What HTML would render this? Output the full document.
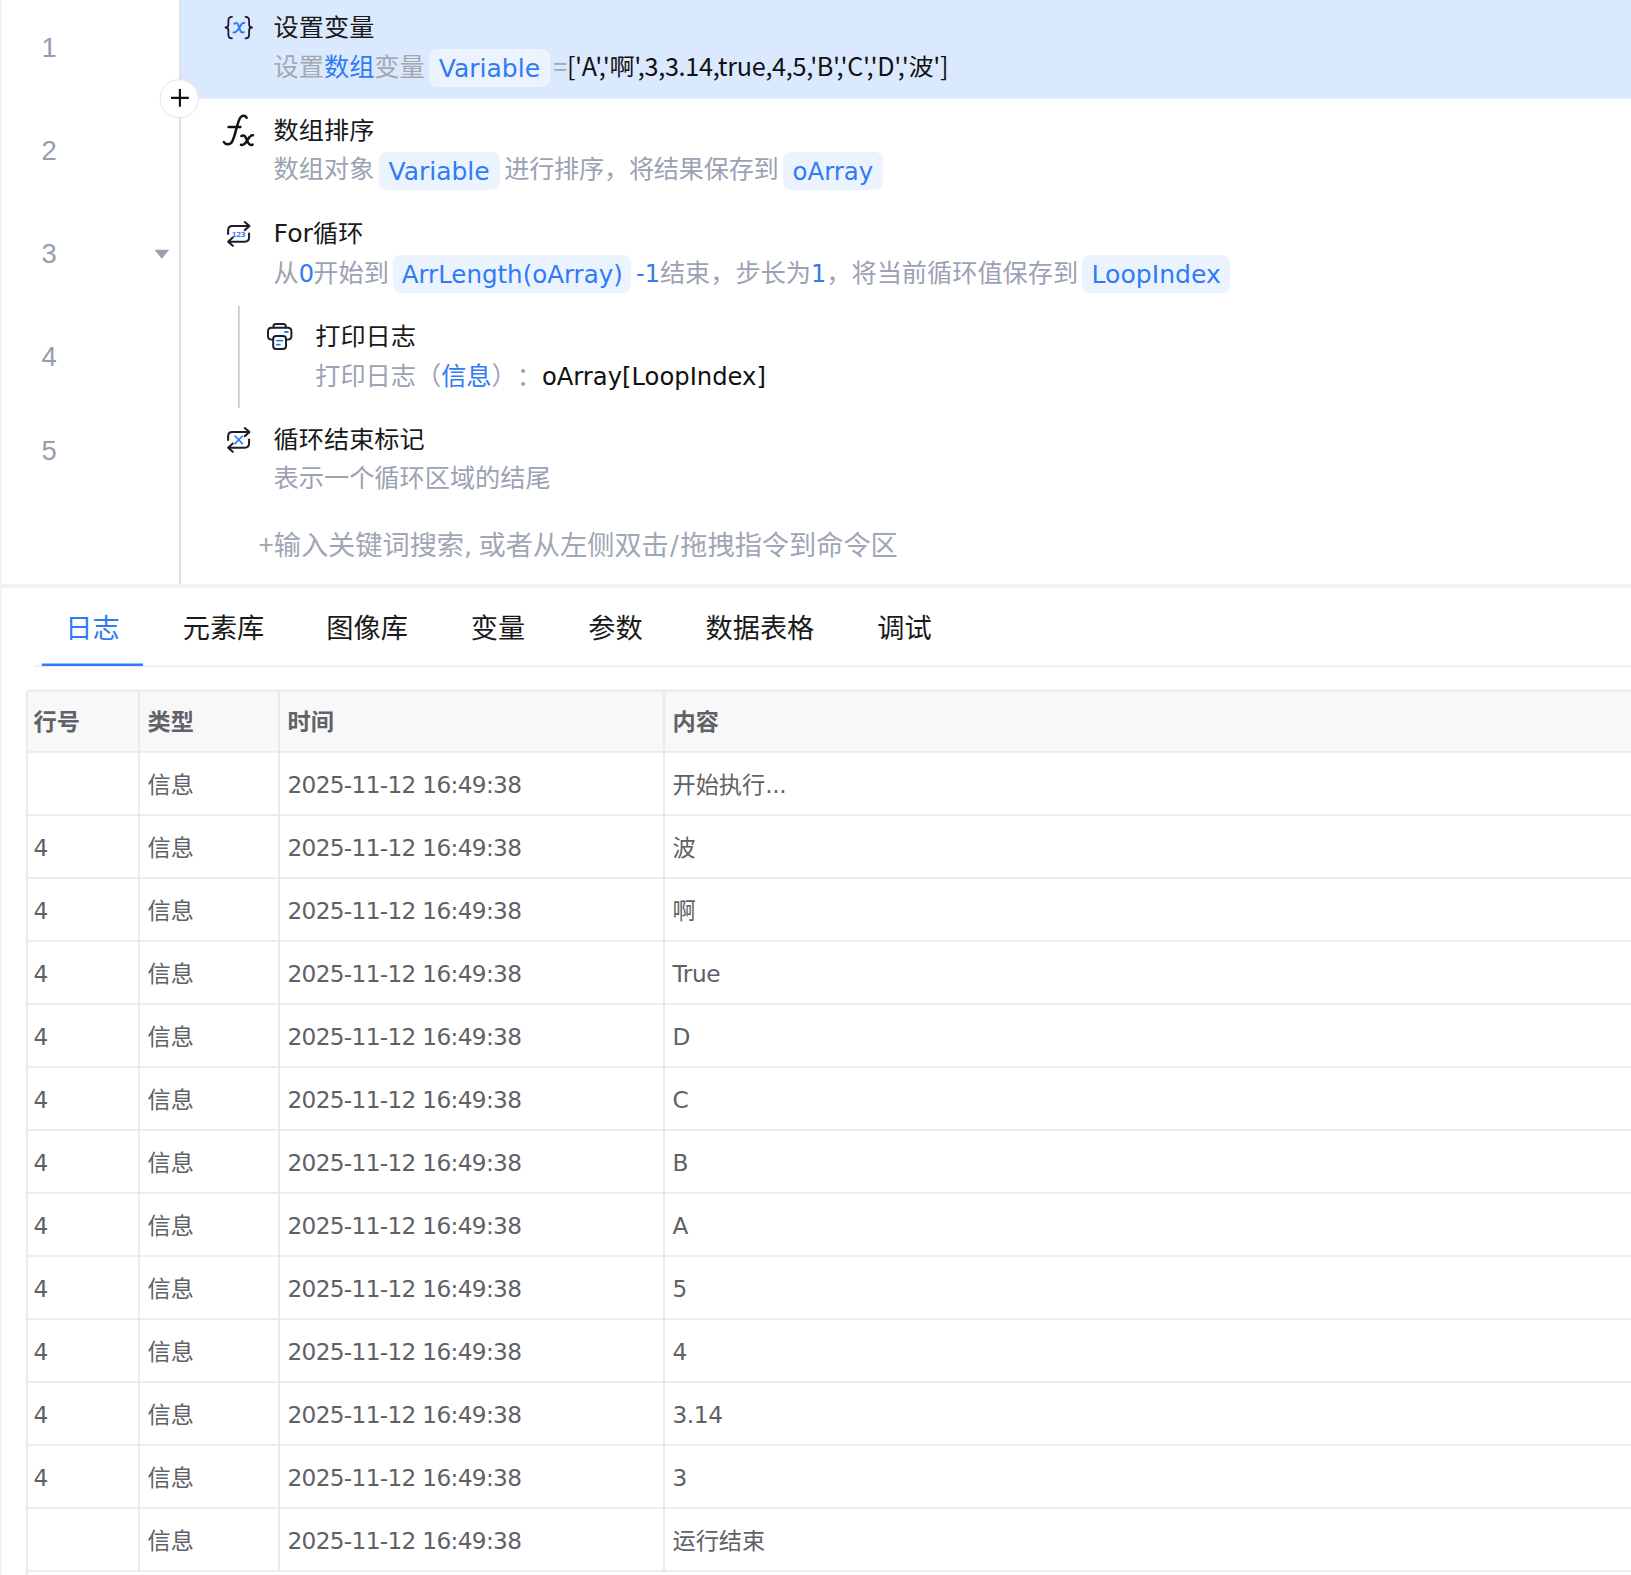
<!DOCTYPE html>
<html>
<head>
<meta charset="utf-8">
<title>流程编辑 - 日志</title>
<style>
html,body{margin:0;padding:0;background:#fff;}
body{width:1631px;height:1575px;overflow:hidden;position:relative;
  font-family:"DejaVu Sans","Noto Sans CJK SC",sans-serif;color:#1a1a1a;text-spacing-trim:space-all;}
#root{position:absolute;left:0;top:0;width:1631px;height:1575px;overflow:hidden;background:#fff;}
svg.bg{position:absolute;left:0;top:0;}
svg.ic{position:absolute;overflow:visible;}
.l{font-size:.952em;}
.ln{position:absolute;left:0;width:98px;text-align:center;font-family:'Liberation Sans',sans-serif;font-size:27.4px;line-height:40px;height:40px;color:#959db0;}
.title{position:absolute;white-space:nowrap;font-size:25.2px;line-height:36px;height:36px;color:#1a1a1a;transform:scaleY(.955);transform-origin:0 29px;}
.desc{position:absolute;white-space:nowrap;font-size:25.2px;line-height:38px;height:38px;color:#9ba2b3;}
.desc .b{color:#2f7bf5;}
.desc .k{color:#111;}
.pill{display:inline-block;height:38px;line-height:39.2px;padding:0;text-align:center;margin:0 4.7px 0 4.3px;border-radius:8px;background:#ebf3ff;color:#2f7bf5;font-size:24.7px;vertical-align:top;position:relative;top:var(--po,0px);}
.arr .c{display:inline-block;transform:scaleY(.9);transform-origin:50% 80%;}
.arr{font-family:'Noto Sans CJK SC',sans-serif;letter-spacing:-.3px;color:#111;line-height:0;margin-left:-1.4px;}
.sel.desc{color:#a4a8b1;}
.sel .pill{background:#ecf3fe;}
.ph{position:absolute;white-space:nowrap;font-size:27.2px;line-height:40px;color:#a0a6b5;}
.tab{position:absolute;white-space:nowrap;font-size:27.2px;line-height:40px;top:608.6px;color:#1a1a1a;}
.tab.on{color:#2f7bf5;}
.th{position:absolute;white-space:nowrap;font-size:23.2px;line-height:34px;font-weight:bold;color:#606267;}
.ts{letter-spacing:-.66px;}
.td .l{font-size:1em;letter-spacing:-.4px;}
.td{position:absolute;white-space:nowrap;font-size:23.2px;line-height:34px;color:#5f6166;}
</style>
</head>
<body>
<div id="root">
<svg class="bg" width="1631" height="1575" viewBox="0 0 1631 1575"><rect x="0" y="0" width="1.8" height="1575" fill="#f0f2f5"/><rect x="0" y="584" width="1631" height="4" fill="#f1f2f5"/><rect x="181" y="0" width="1450" height="98.7" fill="#dbe9fe"/><rect x="179" y="0" width="2" height="584" fill="#dfe0e3"/><rect x="238" y="306" width="1.7" height="102" fill="#c9cacd"/><circle cx="179.3" cy="98.7" r="19.1" fill="#fff" stroke="#e3e5ea" stroke-width="1"/><path d="M171 97.8H188.8M179.9 88.9V106.7" stroke="#111" stroke-width="2.15" fill="none"/><path d="M154.5 249.8H169.2L161.85 258.8Z" fill="#9aa0ae"/><rect x="34" y="665.6" width="1597" height="1.2" fill="#e6e8ec"/><rect x="41.8" y="663.5" width="101.2" height="2.5" fill="#2f7bf5"/><rect x="26.8" y="690.6" width="1610" height="61.4" fill="#f8f8f9"/><path d="M26.8 690.6H1631M26.8 752.0H1631M26.8 815.0H1631M26.8 878.0H1631M26.8 941.0H1631M26.8 1004.0H1631M26.8 1067.0H1631M26.8 1130.0H1631M26.8 1193.0H1631M26.8 1256.0H1631M26.8 1319.0H1631M26.8 1382.0H1631M26.8 1445.0H1631M26.8 1508.0H1631M26.8 1571.0H1631M26.8 690.6V1575M138.9 690.6V1571M279.0 690.6V1571M664.0 690.6V1571" stroke="#e6e7eb" stroke-width="1.6" fill="none"/></svg>
<div class="ln" style="top:27.6px">1</div>
<div class="ln" style="top:130.7px">2</div>
<div class="ln" style="top:233.7px">3</div>
<div class="ln" style="top:337.0px">4</div>
<div class="ln" style="top:431.4px">5</div>
<svg class="ic" style="left:0;top:0" width="330" height="470" viewBox="0 0 330 470" fill="none" stroke-linecap="round" stroke-linejoin="round">
<!-- set variable {x} -->
<g stroke="#1e1c2c" stroke-width="1.8">
<path d="M232 16.8C229.4 16.8 228.4 18 228.4 20.4V24.2C228.4 26.2 227.5 27.5 225.5 27.5C227.5 27.5 228.4 28.8 228.4 30.8V34.7C228.4 37.1 229.4 38.3 232 38.3"/>
<path d="M245.5 16.8C248.1 16.8 249.1 18 249.1 20.4V24.2C249.1 26.2 250 27.5 252 27.5C250 27.5 249.1 28.8 249.1 30.8V34.7C249.1 37.1 248.1 38.3 245.5 38.3"/>
</g>
<g stroke="#2f7bf5" stroke-width="2">
<path d="M234.4 23.6C236.1 22.4 237.6 23 238.5 25.4L240 29.9C240.8 32.2 242.1 33 243.8 32.2"/>
<path d="M244.4 22.9C242.9 22.5 241.6 23.8 239.9 26.7C238.1 29.8 236.2 32.8 233.6 32.6"/>
</g>
<!-- fx -->
<g stroke="#111" stroke-width="2.5">
<path d="M246.6 117.8C245.6 115.6 242.6 114.9 240.6 117.2C239 119 238 122.6 236.4 128.6C234.6 135.4 233.6 139.8 231.6 142.4C229.4 145.2 225.4 144.9 223.8 142"/>
<path d="M228.6 126.9H240.4"/>
<path d="M241.4 136C243.4 134.8 244.8 135.6 245.8 137.8L248 142.6C249 144.8 250.4 145.6 252.6 144.6M253 135.2C251.4 134.8 250 136 248 139.2L246 142.2C244.4 144.6 243 145.4 241 144.8"/>
</g>
<!-- for loop -->
<g stroke="#1e1c2c" stroke-width="2.1" transform="translate(238.6 234) scale(.97) translate(-238.6 -234)">
<path d="M227.8 234V230.2C227.8 227.4 229.6 225.8 232.2 225.8H249.6M245 221.6L249.8 225.8L245 230"/>
<path d="M249.4 233.6V237.4C249.4 240.2 247.6 241.9 245 241.9H227.9M232.6 237.6L227.8 241.9L232.6 246.2"/>
</g>
<text x="238.5" y="236.5" text-anchor="middle" font-family="'DejaVu Sans','Liberation Sans',sans-serif" font-weight="bold" font-size="7" fill="#2f7bf5" stroke="none" letter-spacing="-0.35">123</text>
<!-- printer -->
<g stroke="#1e1c2c" stroke-width="1.95">
<path d="M273.4 327.4V326.4C273.4 324.8 274.6 324 276 324H283.2C284.8 324 285.8 324.8 285.8 326.4V327.4"/>
<path d="M273 339.6H271.6C269.4 339.6 268 338.2 268 336V331.4C268 329.2 269.4 327.8 271.6 327.8H287.8C290 327.8 291.4 329.2 291.4 331.4V336C291.4 338.2 290 339.6 287.8 339.6H286.2"/>
<rect x="273.2" y="336" width="12.8" height="13" rx="3"/>
</g>
<g stroke="#2f7bf5" stroke-width="1.9">
<path d="M285 332H287.8M276.8 340.6H282.4M276.8 344.6H279.8"/>
</g>
<!-- loop end -->
<g stroke="#1e1c2c" stroke-width="2.1" transform="translate(0 206) translate(238.6 234) scale(.97) translate(-238.6 -234)">
<path d="M227.8 234V230.2C227.8 227.4 229.6 225.8 232.2 225.8H249.6M245 221.6L249.8 225.8L245 230"/>
<path d="M249.4 233.6V237.4C249.4 240.2 247.6 241.9 245 241.9H227.9M232.6 237.6L227.8 241.9L232.6 246.2"/>
</g>
<path d="M235 436L242.4 443.6M242.4 436L235 443.6" stroke="#2f7bf5" stroke-width="1.6"/>
</svg>

<div class="title" style="left:273.6px;top:9.5px">设置变量</div>
<div class="desc sel" style="left:273.6px;top:49.0px">设置<span class="b">数组</span>变量<span class="pill" style="width:120.9px;font-size:25px">Variable</span><span class="arr"><span style="color:#a4a8b1">=</span>['A','<span class="c">啊</span>',3,3.14,true,4,5,'B','C','D','<span class="c">波</span>']</span></div>
<div class="title" style="left:273.6px;top:112.5px">数组排序</div>
<div class="desc" style="--po:1.3px;left:273.6px;top:150.7px">数组对象<span class="pill" style="width:120.9px;font-size:25px">Variable</span><span style="letter-spacing:-.25px">进行排序，将结果保存到</span><span class="pill" style="width:100.1px;font-size:24.4px">oArray</span></div>
<div class="title" style="left:273.6px;top:215.5px">For循环</div>
<div class="desc" style="--po:.5px;left:273.6px;top:254.5px">从<span class="b" style="letter-spacing:-.8px"><span class="l">0</span></span>开始到<span class="pill" style="width:238.2px;font-size:24.5px">ArrLength(oArray)</span><span class="b"><span class="l">-1</span></span>结束，步长为<span class="b"><span class="l">1</span></span>，将当前循环值保存到<span class="pill" style="width:147.5px;font-size:25.1px">LoopIndex</span></div>
<div class="title" style="left:315.2px;top:318.9px">打印日志</div>
<div class="desc" style="left:315.2px;top:357.6px">打印日志（<span class="b">信息</span>）：<span class="k"><span style="font-size:24.25px">oArray[LoopIndex]</span></span></div>
<div class="title" style="left:273.6px;top:421.5px">循环结束标记</div>
<div class="desc" style="left:273.6px;top:459.5px">表示一个循环区域的结尾</div>
<div class="ph" style="left:258.6px;top:526.4px"><span style="font-family:'Noto Sans CJK SC',sans-serif;line-height:0">+</span>输入关键词搜索<span class="l" style="letter-spacing:-1px">, </span>或者从左侧双击<span class="l" style="padding:0 1.6px 0 1.2px">/</span>拖拽指令到命令区</div>
<div class="tab on" style="left:65.2px">日志</div>
<div class="tab" style="left:182.7px">元素库</div>
<div class="tab" style="left:326.3px">图像库</div>
<div class="tab" style="left:470.8px">变量</div>
<div class="tab" style="left:588.2px">参数</div>
<div class="tab" style="left:705.5px">数据表格</div>
<div class="tab" style="left:877.3px">调试</div>
<div class="th" style="left:33.5px;top:704.5px">行号</div>
<div class="th" style="left:147.5px;top:704.5px">类型</div>
<div class="th" style="left:287.5px;top:704.5px">时间</div>
<div class="th" style="left:672.5px;top:704.5px">内容</div>
<div class="td" style="left:147.5px;top:767.6px">信息</div>
<div class="td" style="left:287.5px;top:767.6px"><span class="ts">2025-11-12 16:49:38</span></div>
<div class="td" style="left:672.5px;top:767.6px">开始执行<span class="l">...</span></div>
<div class="td" style="left:33.5px;top:830.6px"><span class="l">4</span></div>
<div class="td" style="left:147.5px;top:830.6px">信息</div>
<div class="td" style="left:287.5px;top:830.6px"><span class="ts">2025-11-12 16:49:38</span></div>
<div class="td" style="left:672.5px;top:830.6px">波</div>
<div class="td" style="left:33.5px;top:893.6px"><span class="l">4</span></div>
<div class="td" style="left:147.5px;top:893.6px">信息</div>
<div class="td" style="left:287.5px;top:893.6px"><span class="ts">2025-11-12 16:49:38</span></div>
<div class="td" style="left:672.5px;top:893.6px">啊</div>
<div class="td" style="left:33.5px;top:956.6px"><span class="l">4</span></div>
<div class="td" style="left:147.5px;top:956.6px">信息</div>
<div class="td" style="left:287.5px;top:956.6px"><span class="ts">2025-11-12 16:49:38</span></div>
<div class="td" style="left:672.5px;top:956.6px"><span class="l">True</span></div>
<div class="td" style="left:33.5px;top:1019.6px"><span class="l">4</span></div>
<div class="td" style="left:147.5px;top:1019.6px">信息</div>
<div class="td" style="left:287.5px;top:1019.6px"><span class="ts">2025-11-12 16:49:38</span></div>
<div class="td" style="left:672.5px;top:1019.6px"><span class="l">D</span></div>
<div class="td" style="left:33.5px;top:1082.6px"><span class="l">4</span></div>
<div class="td" style="left:147.5px;top:1082.6px">信息</div>
<div class="td" style="left:287.5px;top:1082.6px"><span class="ts">2025-11-12 16:49:38</span></div>
<div class="td" style="left:672.5px;top:1082.6px"><span class="l">C</span></div>
<div class="td" style="left:33.5px;top:1145.6px"><span class="l">4</span></div>
<div class="td" style="left:147.5px;top:1145.6px">信息</div>
<div class="td" style="left:287.5px;top:1145.6px"><span class="ts">2025-11-12 16:49:38</span></div>
<div class="td" style="left:672.5px;top:1145.6px"><span class="l">B</span></div>
<div class="td" style="left:33.5px;top:1208.6px"><span class="l">4</span></div>
<div class="td" style="left:147.5px;top:1208.6px">信息</div>
<div class="td" style="left:287.5px;top:1208.6px"><span class="ts">2025-11-12 16:49:38</span></div>
<div class="td" style="left:672.5px;top:1208.6px"><span class="l">A</span></div>
<div class="td" style="left:33.5px;top:1271.6px"><span class="l">4</span></div>
<div class="td" style="left:147.5px;top:1271.6px">信息</div>
<div class="td" style="left:287.5px;top:1271.6px"><span class="ts">2025-11-12 16:49:38</span></div>
<div class="td" style="left:672.5px;top:1271.6px"><span class="l">5</span></div>
<div class="td" style="left:33.5px;top:1334.6px"><span class="l">4</span></div>
<div class="td" style="left:147.5px;top:1334.6px">信息</div>
<div class="td" style="left:287.5px;top:1334.6px"><span class="ts">2025-11-12 16:49:38</span></div>
<div class="td" style="left:672.5px;top:1334.6px"><span class="l">4</span></div>
<div class="td" style="left:33.5px;top:1397.6px"><span class="l">4</span></div>
<div class="td" style="left:147.5px;top:1397.6px">信息</div>
<div class="td" style="left:287.5px;top:1397.6px"><span class="ts">2025-11-12 16:49:38</span></div>
<div class="td" style="left:672.5px;top:1397.6px"><span class="l">3.14</span></div>
<div class="td" style="left:33.5px;top:1460.6px"><span class="l">4</span></div>
<div class="td" style="left:147.5px;top:1460.6px">信息</div>
<div class="td" style="left:287.5px;top:1460.6px"><span class="ts">2025-11-12 16:49:38</span></div>
<div class="td" style="left:672.5px;top:1460.6px"><span class="l">3</span></div>
<div class="td" style="left:147.5px;top:1523.6px">信息</div>
<div class="td" style="left:287.5px;top:1523.6px"><span class="ts">2025-11-12 16:49:38</span></div>
<div class="td" style="left:672.5px;top:1523.6px">运行结束</div>
</div>
</body>
</html>
